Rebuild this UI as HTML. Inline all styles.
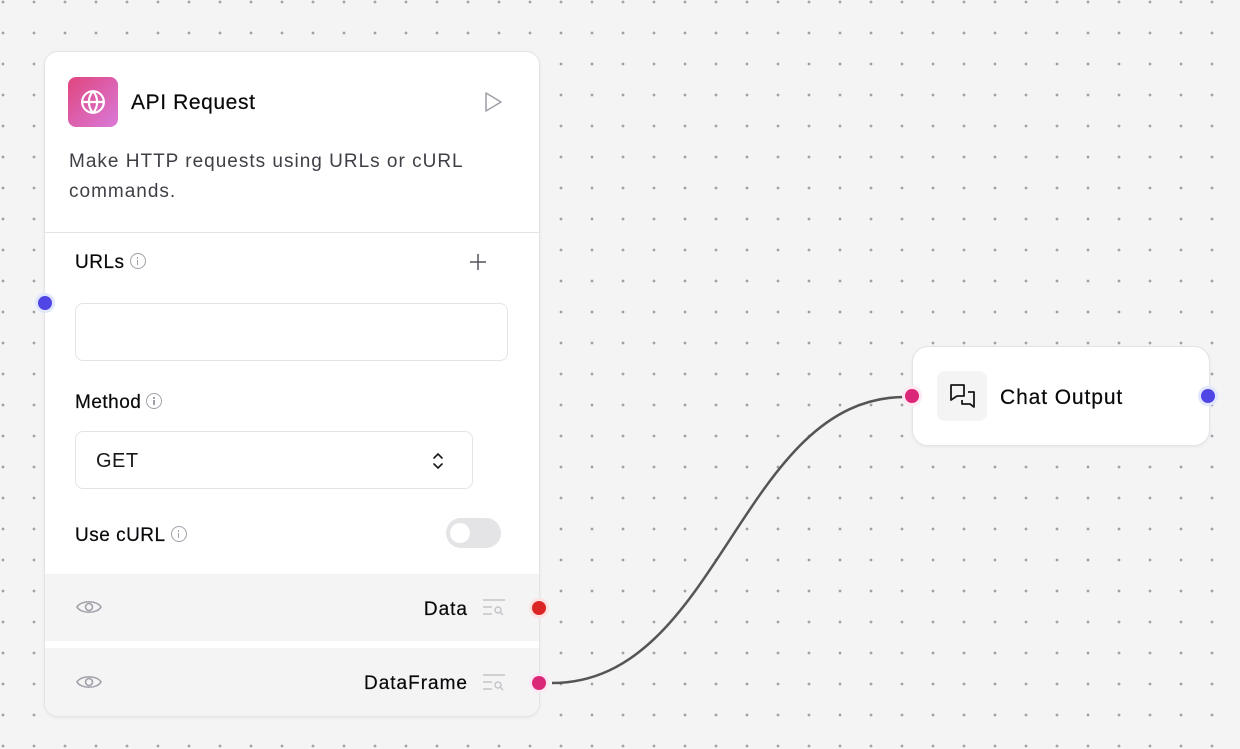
<!DOCTYPE html>
<html><head><meta charset="utf-8"><style>
*{box-sizing:border-box;margin:0;padding:0}
body{width:1240px;height:749px;overflow:hidden;position:relative;font-family:"Liberation Sans",sans-serif;
background-color:#f4f4f5;
background-image:radial-gradient(circle at 1.5px 1.5px,#a1a1aa 1.2px,transparent 1.6px);
background-size:31px 31px;background-position:1.5px 0.5px;}
.abs{position:absolute}
.card{left:44px;top:51px;width:496px;height:666px;background:#fff;border:1px solid #e4e4e7;border-radius:14px;overflow:hidden;box-shadow:0 1px 3px rgba(0,0,0,.06)}
.in{position:absolute;left:-2px;top:-1px;right:-1px;bottom:-1px}
.lbl{font-size:19px;color:#09090b;letter-spacing:0.5px;-webkit-text-stroke:0.2px #09090b}
.info{display:inline-block;width:16px;height:16px;border:1.3px solid #a1a1aa;border-radius:50%;position:relative;vertical-align:middle;margin-left:5px;margin-top:-3px}
.info:after{content:"";position:absolute;left:6px;top:6px;width:1.4px;height:4.5px;background:#a1a1aa}
.info:before{content:"";position:absolute;left:6px;top:3px;width:1.4px;height:1.4px;background:#a1a1aa}
.handle{width:20px;height:20px;border-radius:50%}
</style></head><body>
<svg class="abs" style="left:0;top:0" width="1240" height="749"><path d="M552 683 C 720 683, 740 397, 905 397" fill="none" stroke="#555" stroke-width="2.5"/></svg>

<div class="abs card"><div class="in">
  <div class="abs" style="left:25px;top:26px;width:50px;height:50px;border-radius:8px;background:linear-gradient(135deg,#e0457f,#d97ad9)"></div>
  <svg class="abs" style="left:37px;top:38px" width="26" height="26" viewBox="0 0 24 24" fill="none" stroke="#fff" stroke-width="2" stroke-linecap="round"><circle cx="12" cy="12" r="10"/><path d="M2 12h20M12 2a15 15 0 0 1 0 20M12 2a15 15 0 0 0 0 20"/></svg>
  <div class="abs" style="left:88px;top:40px;font-size:21px;color:#09090b;letter-spacing:0.6px;-webkit-text-stroke:0.2px #09090b">API Request</div>
  <svg class="abs" style="left:439px;top:39px" width="22" height="24" viewBox="0 0 22 24" fill="none" stroke="#a1a1aa" stroke-width="1.6" stroke-linejoin="round"><path d="M4 3l15 9-15 9z"/></svg>
  <div class="abs" style="left:26px;top:96px;font-size:19px;line-height:30px;color:#3f3f46;width:440px;letter-spacing:1px">Make HTTP requests using URLs or cURL commands.</div>
  <div class="abs" style="left:0;top:181px;width:100%;height:1px;background:#e4e4e7"></div>
  <div class="abs lbl" style="left:32px;top:201px">URLs<span class="info"></span></div>
  <svg class="abs" style="left:425px;top:201px" width="20" height="20" viewBox="0 0 20 20" stroke="#52525b" stroke-width="1.5"><path d="M10 2v16M2 10h16"/></svg>
  <div class="abs" style="left:32px;top:252px;width:433px;height:58px;border:1px solid #e4e4e7;border-radius:8px"></div>
  <div class="abs lbl" style="left:32px;top:341px">Method<span class="info"></span></div>
  <div class="abs" style="left:32px;top:380px;width:398px;height:58px;border:1px solid #e4e4e7;border-radius:8px">
    <div class="abs" style="left:20px;top:18px;font-size:20px;color:#18181b;letter-spacing:0.5px">GET</div>
    <svg class="abs" style="left:355px;top:18px" width="14" height="22" viewBox="0 0 14 22" fill="none" stroke="#18181b" stroke-width="1.6" stroke-linecap="round"><path d="M3 8l4-4 4 4M3 14l4 4 4-4"/></svg>
  </div>
  <div class="abs lbl" style="left:32px;top:474px">Use cURL<span class="info"></span></div>
  <div class="abs" style="left:403px;top:467px;width:55px;height:30px;border-radius:15px;background:#e4e4e7"><div class="abs" style="left:4px;top:5px;width:20px;height:20px;border-radius:50%;background:#fff"></div></div>
  <div class="abs" style="left:0;top:523px;width:100%;height:67px;background:#f4f4f5"></div>
  <div class="abs" style="left:0;top:597px;width:100%;height:70px;background:#f4f4f5"></div>
  <svg class="abs" style="left:33px;top:547px" width="26" height="18" viewBox="0 0 26 18" fill="none" stroke="#a1a1aa" stroke-width="1.6"><path d="M1 9C5 2 21 2 25 9C21 16 5 16 1 9z"/><circle cx="13" cy="9" r="3.5"/></svg>
  <svg class="abs" style="left:33px;top:622px" width="26" height="18" viewBox="0 0 26 18" fill="none" stroke="#a1a1aa" stroke-width="1.6"><path d="M1 9C5 2 21 2 25 9C21 16 5 16 1 9z"/><circle cx="13" cy="9" r="3.5"/></svg>
  <div class="abs lbl" style="right:72px;top:548px;letter-spacing:1px">Data</div>
  <div class="abs lbl" style="right:72px;top:622px;letter-spacing:1px">DataFrame</div>
  <svg class="abs" style="left:439px;top:547px" width="26" height="20" viewBox="0 0 26 20" fill="none" stroke="#c4c4c8" stroke-width="1.4"><path d="M1 2h22M1 9h9M1 16h9"/><circle cx="16" cy="12" r="3"/><path d="M18 14l3 3"/></svg>
  <svg class="abs" style="left:439px;top:622px" width="26" height="20" viewBox="0 0 26 20" fill="none" stroke="#c4c4c8" stroke-width="1.4"><path d="M1 2h22M1 9h9M1 16h9"/><circle cx="16" cy="12" r="3"/><path d="M18 14l3 3"/></svg>
</div></div>

<div class="abs handle" style="left:35px;top:293px;background:#e0e7ff"><div class="abs" style="left:3px;top:3px;width:14px;height:14px;border-radius:50%;background:#4f46e5"></div></div>
<div class="abs handle" style="left:529px;top:598px;background:#fee2e2"><div class="abs" style="left:3px;top:3px;width:14px;height:14px;border-radius:50%;background:#dc2626"></div></div>
<div class="abs handle" style="left:529px;top:673px;background:#fce7f3"><div class="abs" style="left:3px;top:3px;width:14px;height:14px;border-radius:50%;background:#db2777"></div></div>

<div class="abs" style="left:912px;top:346px;width:298px;height:100px;background:#fff;border:1px solid #e4e4e7;border-radius:16px;box-shadow:0 1px 3px rgba(0,0,0,.06)">
  <div class="abs" style="left:24px;top:24px;width:50px;height:50px;border-radius:8px;background:#f4f4f5"></div>
  <svg class="abs" style="left:35px;top:35px" width="30" height="30" viewBox="0 0 30 30" fill="none" stroke="#18181b" stroke-width="1.8" stroke-linejoin="round"><path d="M3 3h13v11H9l-6 4z"/><path d="M20 10h6v15l-4-3H14v-4"/></svg>
  <div class="abs" style="left:87px;top:39px;font-size:21px;color:#09090b;letter-spacing:0.9px;-webkit-text-stroke:0.2px #09090b">Chat Output</div>
</div>
<div class="abs handle" style="left:902px;top:386px;background:#fce7f3"><div class="abs" style="left:3px;top:3px;width:14px;height:14px;border-radius:50%;background:#db2777"></div></div>
<div class="abs handle" style="left:1198px;top:386px;background:#e0e7ff"><div class="abs" style="left:3px;top:3px;width:14px;height:14px;border-radius:50%;background:#4f46e5"></div></div>
</body></html>
